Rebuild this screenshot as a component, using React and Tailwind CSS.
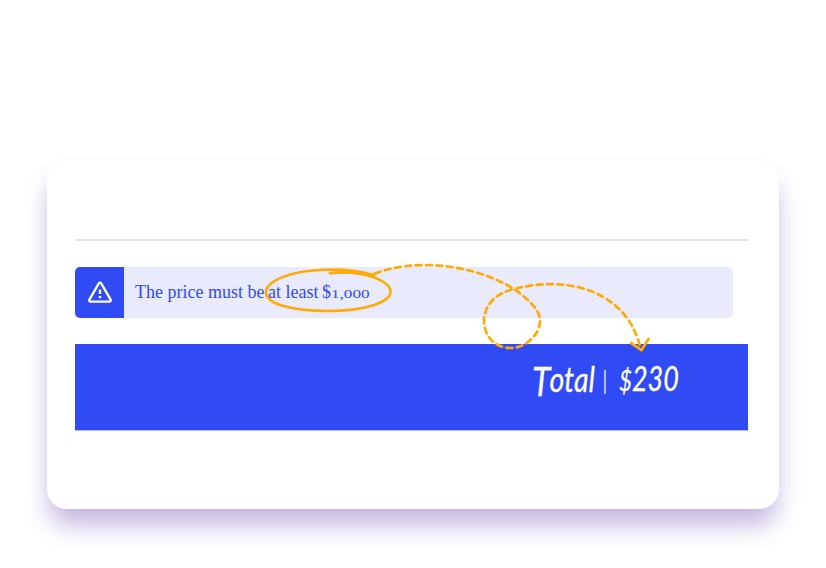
function WarningIcon() {
  return (
    <svg className="h-[26px] w-[26px]" viewBox="0 0 26 26" fill="none" stroke="white">
      <path d="M11.8 4.4 2.4 20.6a1.4 1.4 0 0 0 1.2 2.1h18.8a1.4 1.4 0 0 0 1.2-2.1L14.2 4.4a1.4 1.4 0 0 0-2.4 0Z" strokeWidth="2.3" strokeLinejoin="round" />
      <path d="M13 10.5v4.4M13 17v2.3" strokeWidth="2.4" />
    </svg>
  );
}

function Annotations() {
  return (
    <svg className="pointer-events-none absolute inset-0 h-full w-full" viewBox="0 0 826 568" fill="none" stroke="#ffaa05">
      <path d="M374 275.5C358 270 340 269.3 325 269.7C290 270.5 266 281 266 292.5C266 304 292 311 328 311C363 311 391 303 390.5 291C390 283 374 275 352 272.5" strokeWidth="2.6" strokeLinecap="round" />
      <path d="M330 273.2C346 271.5 360 272.5 374 275" strokeWidth="2.8" strokeLinecap="round" />
      <path d="M375 273.5C410 260 468 261 514 289C535 304 540 313 540 321C540 334 526 348 511 348C494 348 484 335 484 321C484 305 496 293 514 289C553 279 588 285 611 302C628 315 635 329 640 346" strokeWidth="2.7" strokeDasharray="5.9 4.5" strokeLinecap="round" />
      <path d="M631 343 641.5 350 648.5 339" strokeWidth="2.8" strokeLinecap="round" />
    </svg>
  );
}

export default function App() {
  return (
    <main className="relative h-[568px] w-[826px] overflow-hidden bg-white pt-[161px] pl-[47px]">
      <section className="h-[348px] w-[732px] rounded-[20px] bg-white pt-[78px] pl-[28px] shadow-[0_18px_26px_-3px_#c1b3de]">
        <div className="h-[2px] w-[674px] bg-[#e4e4df]" />
        <div className="mt-[25.5px] flex h-[51px] w-[658px] overflow-hidden rounded-[5px] bg-[#e9eafc]">
          <div className="flex w-[49px] items-center justify-center bg-[#304af4]">
            <WarningIcon />
          </div>
          <p className="flex items-baseline pt-[13px] pl-[11px] font-['Liberation_Serif',serif] text-[18px] leading-[24px] whitespace-pre text-[#304af4]">
            <span className="w-[133px]">The price must be </span>
            <span className="w-[54px]">at least</span>
            <span className="w-[9px]">$</span>
            <span className="inline-block origin-left scale-x-[1.32] text-[13px]">1,000</span>
          </p>
        </div>
        <div className="mt-[26.5px] flex h-[87px] w-[673px] border-b border-[#aeb8ff] bg-[#304af4] pt-[13px] pl-[457px] font-['Lato',sans-serif] text-white italic [-webkit-text-stroke:0.3px_white]">
          <span className="-mt-[2px] flex w-[72px] origin-left scale-x-[0.84] items-baseline text-[34px] leading-[44px]">
            <span className="-mr-[1px] -mb-[5px] translate-y-[4px] text-[40px]">T</span>otal
          </span>
          <span className="mt-[13px] h-[24px] w-[1.5px] bg-[#b4bdff]" />
          <span className="ml-[13px] flex origin-left scale-x-[0.77] items-baseline text-[35px] leading-[40px]">
            <span className="text-[29px]">$</span>230
          </span>
        </div>
      </section>
      <Annotations />
    </main>
  );
}
